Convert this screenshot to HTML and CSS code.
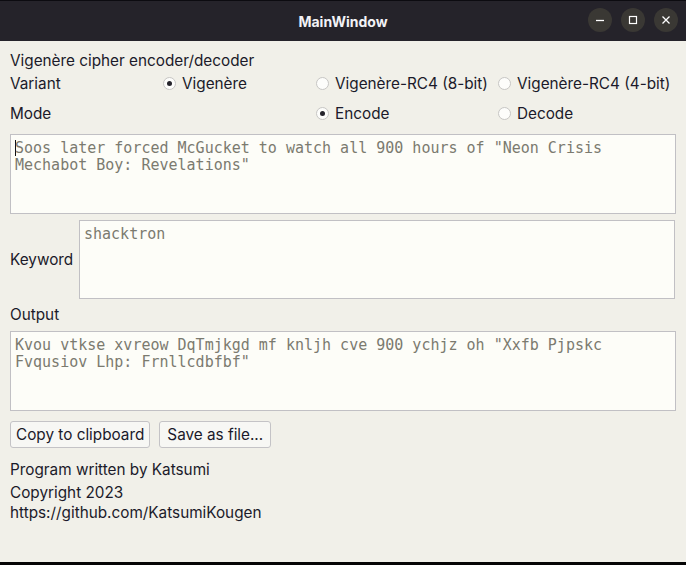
FILE: index.html
```html
<!DOCTYPE html>
<html>
<head>
<meta charset="utf-8">
<link rel="stylesheet" href="styles.css">
</head>
<body>
<div class="window">
  <header class="titlebar">
    <div class="title">MainWindow</div>
    <div class="controls">
      <span class="wbtn"><svg width="12" height="12" viewBox="0 0 12 12"><path d="M2 6.5h8" stroke="#fff" stroke-width="1.3"/></svg></span>
      <span class="wbtn"><svg width="12" height="12" viewBox="0 0 12 12"><rect x="2.5" y="2.5" width="7" height="7" fill="none" stroke="#fff" stroke-width="1.2"/></svg></span>
      <span class="wbtn"><svg width="12" height="12" viewBox="0 0 12 12"><path d="M2.5 2.5l7 7M9.5 2.5l-7 7" stroke="#fff" stroke-width="1.3"/></svg></span>
    </div>
  </header>
  <main class="content">
    <div class="heading">Vigenère cipher encoder/decoder</div>
    <div class="optgrid">
      <div class="lbl">Variant</div>
      <label class="radio"><span class="dot checked"></span>Vigenère</label>
      <label class="radio"><span class="dot"></span>Vigenère-RC4 (8-bit)</label>
      <label class="radio"><span class="dot"></span>Vigenère-RC4 (4-bit)</label>
      <div class="lbl mode">Mode</div>
      <div class="mode"></div>
      <label class="radio mode"><span class="dot checked"></span>Encode</label>
      <label class="radio mode"><span class="dot"></span>Decode</label>
    </div>
    <div class="box input"><span class="caret"></span>Soos later forced McGucket to watch all 900 hours of "Neon Crisis
Mechabot Boy: Revelations"</div>
    <div class="keyrow">
      <div class="lbl">Keyword</div>
      <div class="box key">shacktron</div>
    </div>
    <div class="lbl outlbl">Output</div>
    <div class="box output">Kvou vtkse xvreow DqTmjkgd mf knljh cve 900 ychjz oh "Xxfb Pjpskc
Fvqusiov Lhp: Frnllcdbfbf"</div>
    <div class="buttons">
      <button class="btn">Copy to clipboard</button>
      <button class="btn save">Save as file...</button>
    </div>
    <div class="footer">
      <div class="credit">Program written by Katsumi</div>
      <div>Copyright 2023</div>
      <div>https://github.com/KatsumiKougen</div>
    </div>
  </main>
</div>
</body>
</html>
```

FILE: styles.css
```css
html, body {
  margin: 0;
  padding: 0;
  background: #000;
}
.window {
  width: 686px;
  height: 565px;
  box-sizing: border-box;
  border-bottom: 3px solid #050505;
  display: flex;
  flex-direction: column;
  background: #f1f0e9;
  font-family: Inter, "Noto Sans", sans-serif;
  font-size: 15.3px;
  color: #1b1a2a;
  overflow: hidden;
}
.titlebar {
  height: 41px;
  flex: none;
  background: #25232a;
  border-top: 1px solid #0c0b10;
  box-sizing: border-box;
  display: flex;
  align-items: center;
  justify-content: center;
  position: relative;
}
.title {
  color: #f2f2f6;
  font-weight: 700;
  font-size: 14px;
}
.controls {
  position: absolute;
  right: 8px;
  top: 7px;
  display: flex;
  gap: 9px;
}
.wbtn {
  width: 24px;
  height: 24px;
  border-radius: 50%;
  background: #3a3834;
  display: flex;
  align-items: center;
  justify-content: center;
}
.content {
  flex: 1;
  min-height: 0;
  overflow: hidden;
  padding: 10px 10px 0 10px;
  display: flex;
  flex-direction: column;
}
.heading {
  line-height: 20px;
}
.optgrid {
  display: grid;
  grid-template-columns: 153px 153px 182px 178px;
  grid-template-rows: 24px 29px;
  align-items: center;
  margin-top: 0;
}
.optgrid .mode {
  align-self: center;
  padding-top: 8px;
}
.radio {
  display: flex;
  align-items: center;
  gap: 6px;
  white-space: nowrap;
}
.dot {
  width: 13px;
  height: 13px;
  box-sizing: border-box;
  border-radius: 50%;
  border: 1px solid #c7c6c4;
  background: #fdfdfb;
  display: inline-flex;
  align-items: center;
  justify-content: center;
  flex: none;
}
.dot.checked::after {
  content: "";
  width: 5px;
  height: 5px;
  border-radius: 50%;
  background: #25242c;
}
.box {
  background: #fdfdf8;
  border: 1px solid #c1c0c4;
  box-sizing: border-box;
  font-family: "DejaVu Sans Mono", monospace;
  font-size: 15px;
  line-height: 17px;
  color: #7b7a6f;
  white-space: pre;
  padding: 5px 4px;
}
.input {
  height: 80px;
  margin-top: 10px;
  flex: none;
}
.caret {
  display: inline-block;
  width: 1px;
  height: 16px;
  background: #111;
  vertical-align: -3px;
  margin-right: -1px;
}
.keyrow {
  display: flex;
  align-items: center;
  gap: 9px;
  margin-top: 6px;
  flex: none;
}
.keyrow .lbl {
  width: 60px;
}
.key {
  width: 596px;
  height: 79px;
}
.outlbl {
  margin-top: 6px;
  line-height: 20px;
}
.output {
  height: 80px;
  margin-top: 6px;
  flex: none;
}
.buttons {
  display: flex;
  gap: 9px;
  margin-top: 10px;
}
.btn {
  font: inherit;
  color: inherit;
  background: #f7f7f4;
  border: 1px solid #c4c3c6;
  border-radius: 3px;
  height: 27px;
  padding: 0 5px;
}
.btn.save {
  padding: 0 7px;
}
.footer {
  margin-top: 12px;
  line-height: 20px;
}
.credit {
  margin-bottom: 3px;
}
```
